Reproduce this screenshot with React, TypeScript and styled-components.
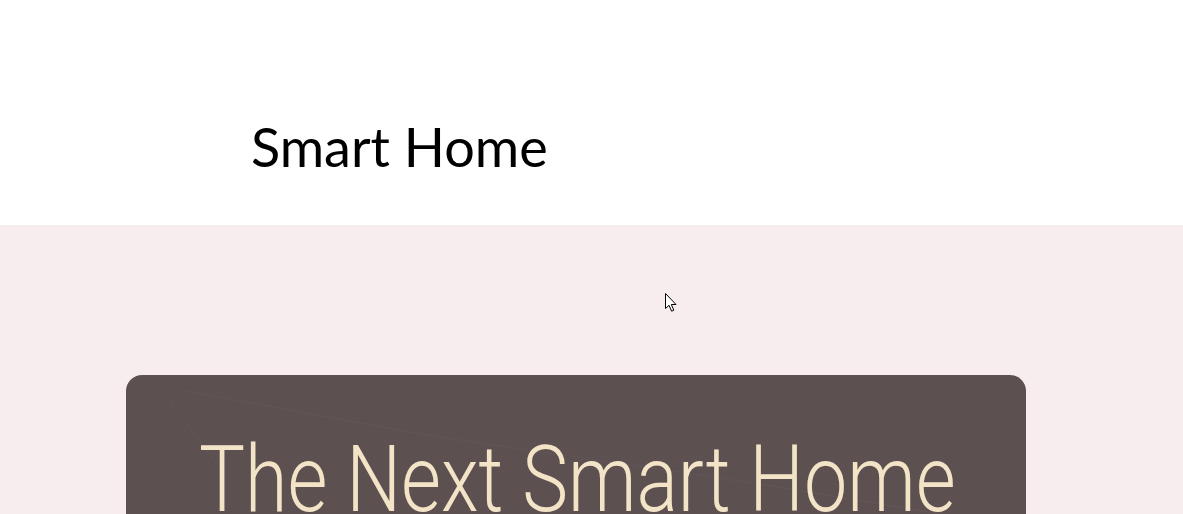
import React from "react";
import styled, { createGlobalStyle } from "styled-components";

const Global = createGlobalStyle`
  html, body { margin: 0; padding: 0; background: #ffffff; }
  body { overflow: hidden; }
  * { box-sizing: border-box; }
`;

const Page = styled.div`
  position: relative;
  width: 1183px;
  height: 514px;
  overflow: hidden;
  display: flex;
  flex-direction: column;
`;

const Header = styled.header`
  height: 225px;
  background: #ffffff;
  padding: 120px 0 0 251px;
  flex-shrink: 0;
`;

const SiteTitle = styled.h1`
  margin: 0;
  font-family: Lato, "Open Sans", sans-serif;
  font-weight: 400;
  font-size: 54px;
  line-height: 1;
  letter-spacing: 0;
  color: #000000;
`;

const Hero = styled.section`
  flex: 1;
  background: #f8edee;
  padding: 150px 0 0 126px;
`;

const Card = styled.div`
  position: relative;
  width: 900px;
  height: 400px;
  background: #5d5051;
  border-radius: 16px;
  padding: 58px 0 0 73px;
  overflow: hidden;
`;

const Pattern = styled.svg`
  position: absolute;
  inset: 0;
  pointer-events: none;
`;

const Heading = styled.h2`
  position: relative;
  margin: 0;
  font-family: Roboto, "Liberation Sans", sans-serif;
  font-weight: 300;
  font-size: 93px;
  line-height: 1;
  color: #f3e4c8;
  white-space: nowrap;
  transform: scaleX(0.83);
  transform-origin: left top;
`;

const Cursor = styled.svg`
  position: absolute;
  left: 665px;
  top: 293px;
`;

export default function App() {
  return (
    <Page>
      <Global />
      <Header>
        <SiteTitle>Smart Home</SiteTitle>
      </Header>
      <Hero>
        <Card>
          <Pattern width="900" height="400" viewBox="0 0 900 400">
            <g stroke="#665a5b" strokeWidth="1" fill="none" opacity="0.6">
              <path d="M52 18 Q44 20 46 30 L92 90" />
              <path d="M60 16 L300 60 L640 110 L880 150" />
            </g>
          </Pattern>
          <Heading>The Next Smart Home</Heading>
        </Card>
      </Hero>
      <Cursor width="13" height="20" viewBox="0 0 13 20">
        <path
          d="M0.5 0.5 L0.5 15.5 L4 12.3 L6.6 18.2 L8.8 17.2 L6.3 11.5 L11 11.5 Z"
          fill="#ffffff"
          stroke="#000000"
          strokeWidth="1"
          strokeLinejoin="miter"
        />
      </Cursor>
    </Page>
  );
}
